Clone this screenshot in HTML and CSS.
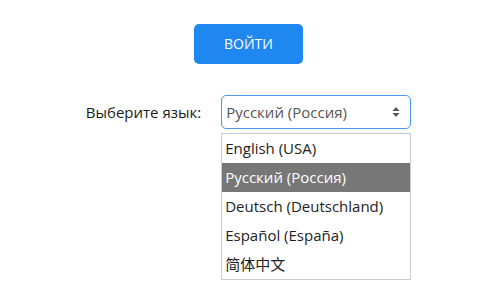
FILE: index.html
```html
<html lang="ru">

<head>
  <meta charset="UTF-8">
  <meta name="viewport" content="width=device-width, initial-scale=1.0">
  <title>Вход</title>
  <link rel="stylesheet" href="styles.css">
</head>

<body>
  <div class="login-page">
    <button type="button" class="login-btn">Войти</button>
    <div class="lang-row">
      <label class="lang-label">Выберите язык:</label>
      <div class="lang-picker">
        <div class="lang-select">
          <span>Русский (Россия)</span>
          <svg class="lang-arrows" width="8" height="12" viewBox="0 0 8 12">
            <path d="M4 1 L7.5 5 L0.5 5 Z" fill="#555" />
            <path d="M4 11 L7.5 7 L0.5 7 Z" fill="#555" />
          </svg>
        </div>
        <div class="lang-list">
          <div class="lang-option">English (USA)</div>
          <div class="lang-option selected">Русский (Россия)</div>
          <div class="lang-option">Deutsch (Deutschland)</div>
          <div class="lang-option">Español (España)</div>
          <div class="lang-option">简体中文</div>
        </div>
      </div>
    </div>
  </div>
</body>

</html>
```

FILE: styles.css
```css
* {
  box-sizing: border-box;
  margin: 0;
  padding: 0;
  font-family: "Open Sans", "Noto Sans CJK SC", sans-serif;
}

body {
  background: #FFF;
  color: #222;
}

.login-page {
  display: flex;
  flex-direction: column;
  align-items: center;
  padding-top: 24px;
  padding-left: 4px;
}

.login-btn {
  all: unset;
  width: 109px;
  height: 40px;
  border-radius: 5px;
  background: #1E88F0;
  color: #FFF;
  font-size: 14px;
  text-transform: uppercase;
  text-align: center;
  line-height: 40px;
  cursor: pointer;
}

.lang-row {
  display: flex;
  align-items: flex-start;
  gap: 20px;
  margin-top: 31px;
}

.lang-label {
  font-size: 15px;
  line-height: 34px;
  color: #1A1A1A;
}

.lang-picker {
  width: 190px;
}

.lang-select {
  display: flex;
  align-items: center;
  justify-content: space-between;
  height: 34px;
  padding: 0 10px 0 4px;
  border: 1px solid #4A98F0;
  border-radius: 5px;
  font-size: 15px;
  color: #555;
}

.lang-arrows {
  display: block;
}

.lang-list {
  margin-top: 4px;
  border: 1px solid #CCC;
  background: #FFF;
}

.lang-option {
  height: 29px;
  line-height: 29px;
  padding: 0 3px;
  font-size: 15px;
  color: #222;
  white-space: nowrap;
}

.lang-option.selected {
  background: #777;
  color: #FFF;
}
```
